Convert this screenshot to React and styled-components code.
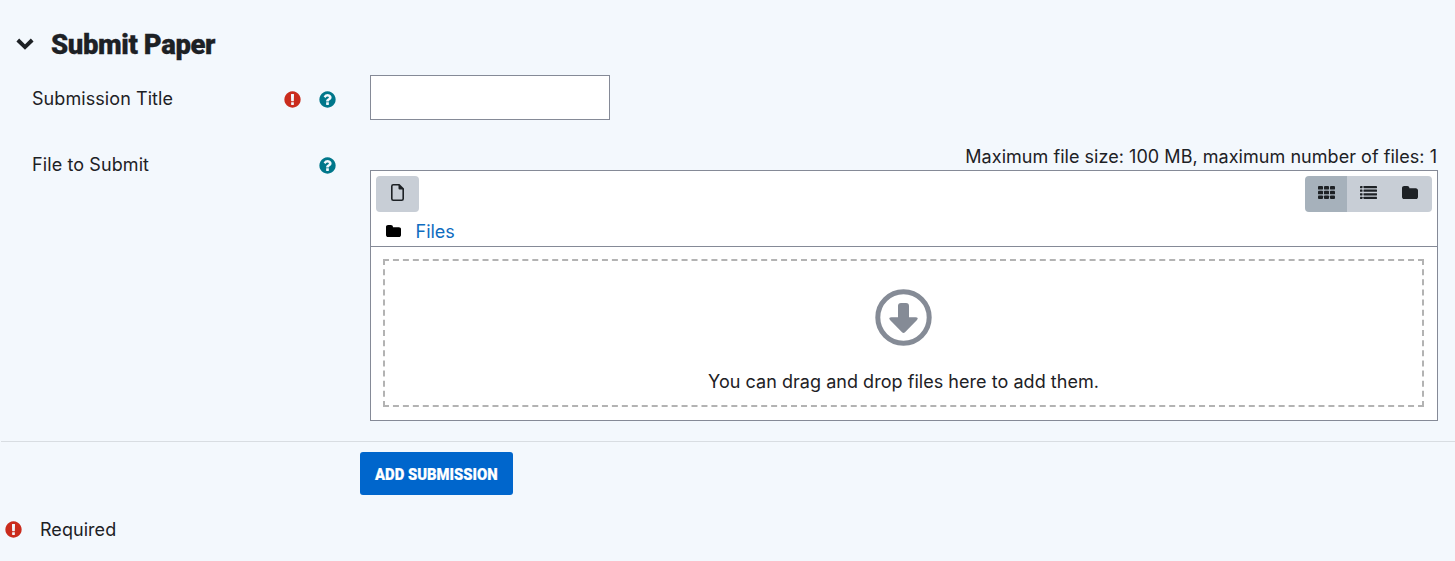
import React from 'react';
import styled, { createGlobalStyle } from 'styled-components';

const Global = createGlobalStyle`
  * { box-sizing: border-box; }
  body { margin: 0; background: #f3f8fd; color: #1d2125; font: 18px/27px Inter, "Liberation Sans", sans-serif; }
`;
const Page = styled.main`height: 561px; overflow: hidden;`;
const Header = styled.header`display: flex; align-items: center; height: 75px; padding: 13px 0 0 16px; gap: 17px;`;
const Heading = styled.h2`
  margin: 0; padding-top: 2px; font: 900 27px/36px Roboto, sans-serif; letter-spacing: -0.4px; white-space: nowrap;
  transform: scaleX(${p => p.$scale}); transform-origin: left; -webkit-text-stroke: 0.3px currentColor;
`;
const Row = styled.div`display: flex; height: ${p => p.$height}px; padding-right: 17px;`;
const LabelCell = styled.div`
  display: flex; justify-content: space-between; align-items: center; width: 370px; height: 27px;
  margin-top: ${p => p.$top}px; padding: 0 34px 0 32px; flex: none;
`;
const Label = styled.label`letter-spacing: ${p => p.$spacing || 0}px; white-space: nowrap;`;
const Marks = styled.span`display: flex; gap: 18px; padding-top: 2px;`;
const Glyph = styled.svg`display: block; flex: none; fill: currentColor; color: ${p => p.$color || '#1d2125'};`;
const TextInput = styled.input`width: 240px; height: 45px; border: 1px solid #858a97; background: #fff; padding: 8px 12px; font: inherit; border-radius: 0;`;
const Manager = styled.div`flex: 1; display: flex; flex-direction: column;`;
const Limit = styled.div`height: 27px; padding-right: 1px; text-align: right; white-space: nowrap; letter-spacing: ${p => p.$spacing}px;`;
const Panel = styled.section`height: 251px; border: 1px solid #858a97; background: #fff;`;
const Toolbar = styled.div`height: 41px; padding: 5px 5px 0; display: flex; justify-content: space-between;`;
const ToolGroup = styled.div`display: flex; height: 36px; border-radius: 4px; overflow: hidden;`;
const Tool = styled.button`
  border: 0; padding: 0 ${p => p.$shift || 0}px 3px 0; width: ${p => p.$width || 42}px; height: 36px; display: flex; align-items: center; justify-content: center;
  background: ${p => (p.$active ? '#a6b1bb' : '#c8ced6')}; color: #1d2125;
`;
const Crumbs = styled.nav`height: 35px; padding: 6px 0 0 15px; display: flex; gap: 14.5px; border-bottom: 1px solid #858a97;`;
const CrumbIcon = styled.span`padding-top: 7px;`;
const Crumb = styled.a`color: #0f6cbf; line-height: 27px;`;
const DropArea = styled.div`padding: 12px 13px 13px 12px;`;
const DropZone = styled.div`
  height: 148px; border: 2px dashed #b3b3b3; display: flex; flex-direction: column; align-items: center;
  padding-top: 27.5px; color: #1d2125;
`;
const DropText = styled.div`margin-top: 22.5px; letter-spacing: ${p => p.$spacing}px;`;
const Actions = styled.div`margin: 20px 0 0 1px; height: 54px; border-top: 1px solid #d8dde2; padding: 10px 0 0 359px;`;
const Submit = styled.button`
  display: flex; justify-content: center; align-items: center; width: 153px; height: 43px; border: 0; border-radius: 3px;
  padding: 2px 0 0; background: #0066cc; color: #fff; font: 900 16px/20px Roboto, sans-serif; white-space: nowrap;
`;
const SubmitText = styled.span`transform: scaleX(${p => p.$scale}); -webkit-text-stroke: 0.2px currentColor;`;
const Footer = styled.footer`display: flex; align-items: center; padding: 0 0 0 4.5px; gap: 18.5px; margin-top: 21px; height: 27px;`;

const RequiredIcon = () => (
  <Glyph width="17" height="17" viewBox="96 96 1600 1600" $color="#ca2c1d" aria-label="Required">
    <path d="M896 128q209 0 385.5 103t279.5 279.5 103 385.5-103 385.5-279.5 279.5-385.5 103-385.5-103-279.5-279.5-103-385.5 103-385.5 279.5-279.5 385.5-103zm128 1247v-190q0-14-9-23.5t-22-9.5h-192q-13 0-23 10t-10 23v190q0 13 10 23t23 10h192q13 0 22-9.5t9-23.5zm-2-344l18-621q0-12-10-18-10-8-24-8h-220q-14 0-24 8-10 6-10 18l17 621q0 10 10 17.5t24 7.5h203q14 0 23.5-7.5t10.5-17.5z" />
  </Glyph>
);
const HelpIcon = () => (
  <Glyph width="17" height="17" viewBox="96 96 1600 1600" $color="#00778b" aria-label="Help">
    <path d="M1024 1376v-192q0-14-9-23t-23-9h-192q-14 0-23 9t-9 23v192q0 14 9 23t23 9h192q14 0 23-9t9-23zm256-672q0-88-55.5-163t-138.5-116-170-41q-243 0-371 213-15 24 8 42l132 100q7 6 19 6 16 0 25-12 53-68 86-92 34-24 86-24 48 0 85.5 26t37.5 59q0 38-20 61t-68 45q-63 28-115.5 86.5t-52.5 125.5v36q0 14 9 23t23 9h192q14 0 23-9t9-23q0-19 21.5-49.5t54.5-49.5q32-18 49-28.5t46-35 44.5-48 28-60.5 12.5-81zm384 192q0 209-103 385.5t-279.5 279.5-385.5 103-385.5-103-279.5-279.5-103-385.5 103-385.5 279.5-279.5 385.5-103 385.5 103 279.5 279.5 103 385.5z" />
  </Glyph>
);
const FolderIcon = ({ width, height, color }) => (
  <Glyph width={width} height={height} viewBox="64 128 1664 1408" preserveAspectRatio="none" $color={color}>
    <path d="M1728 608v704q0 92-66 158t-158 66h-1216q-92 0-158-66t-66-158v-960q0-92 66-158t158-66h320q92 0 158 66t66 158v32h672q92 0 158 66t66 158z" />
  </Glyph>
);
const FileIcon = () => (
  <Glyph width="13" height="17" viewBox="0 0 13 17">
    <path d="M2.3.8h5.8l4.1 4.1v9.8q0 1.5-1.5 1.5H2.3Q.8 16.200.8 14.700V2.300Q.8.8 2.300.8Z" fill="none" stroke="currentColor" strokeWidth="1.6" />
    <path d="M7.500.5 12.500 5.500H8.500Q7.500 5.500 7.500 4.500Z" />
  </Glyph>
);
const GridIcon = () => (
  <Glyph width="17" height="13" viewBox="0 0 17 13">
    {[0, 4.7, 9.4].map(y => [0, 6, 12].map(x => <rect key={`${x}-${y}`} x={x} y={y} width="5" height="3.6" rx="0.9" />))}
  </Glyph>
);
const ListIcon = () => (
  <Glyph width="17" height="13" viewBox="0 0 17 13">
    {[0, 3.6, 7.2, 10.8].map(y => (
      <g key={y}><rect y={y} width="2.5" height="2.2" rx="0.4" /><rect x="3.5" y={y} width="13.5" height="2.2" rx="0.4" /></g>
    ))}
  </Glyph>
);

export default function App() {
  return (
    <>
      <Global />
      <Page>
        <Header>
          <Glyph width="18" height="12" viewBox="0 0 18 12">
            <path d="M1.800 2 9 9.100 16.200 2" fill="none" stroke="currentColor" strokeWidth="3.900" strokeLinejoin="miter" />
          </Glyph>
          <Heading $scale={1.018}>Submit Paper</Heading>
        </Header>
        <Row $height={68}>
          <LabelCell $top={10}>
            <Label htmlFor="title" $spacing={0.07}>Submission Title</Label>
            <Marks><RequiredIcon /><HelpIcon /></Marks>
          </LabelCell>
          <TextInput id="title" />
        </Row>
        <Row $height={278}>
          <LabelCell $top={8}>
            <Label $spacing={0.1}>File to Submit</Label>
            <Marks><HelpIcon /></Marks>
          </LabelCell>
          <Manager>
            <Limit $spacing={0.04}>Maximum file size: 100 MB, maximum number of files: 1</Limit>
            <Panel>
              <Toolbar>
                <ToolGroup><Tool $width={43} $shift={1} aria-label="Add file"><FileIcon /></Tool></ToolGroup>
                <ToolGroup>
                  <Tool $active aria-label="Icons"><GridIcon /></Tool>
                  <Tool aria-label="List"><ListIcon /></Tool>
                  <Tool $width={43} $shift={2} aria-label="Tree"><FolderIcon width={16} height={13} /></Tool>
                </ToolGroup>
              </Toolbar>
              <Crumbs>
                <CrumbIcon><FolderIcon width={15} height={12} color="#000" /></CrumbIcon>
                <Crumb>Files</Crumb>
              </Crumbs>
              <DropArea>
                <DropZone>
                  <Glyph width="57" height="57" viewBox="0 0 57 57" $color="#858b96">
                    <circle cx="28.5" cy="28.5" r="25.7" fill="none" stroke="currentColor" strokeWidth="5" />
                    <path d="M26 14h5q3 0 3 3V28.300h6.500q3.500 0 1.500 2.700L30 43.200q-1.500 1.500-3 0L15 31q-2-2.700 1.500-2.700H23V17Q23 14 26 14Z" />
                  </Glyph>
                  <DropText $spacing={0.04}>You can drag and drop files here to add them.</DropText>
                </DropZone>
              </DropArea>
            </Panel>
          </Manager>
        </Row>
        <Actions><Submit><SubmitText $scale={0.925}>ADD SUBMISSION</SubmitText></Submit></Actions>
        <Footer><RequiredIcon /><Label $spacing={0.05}>Required</Label></Footer>
      </Page>
    </>
  );
}
